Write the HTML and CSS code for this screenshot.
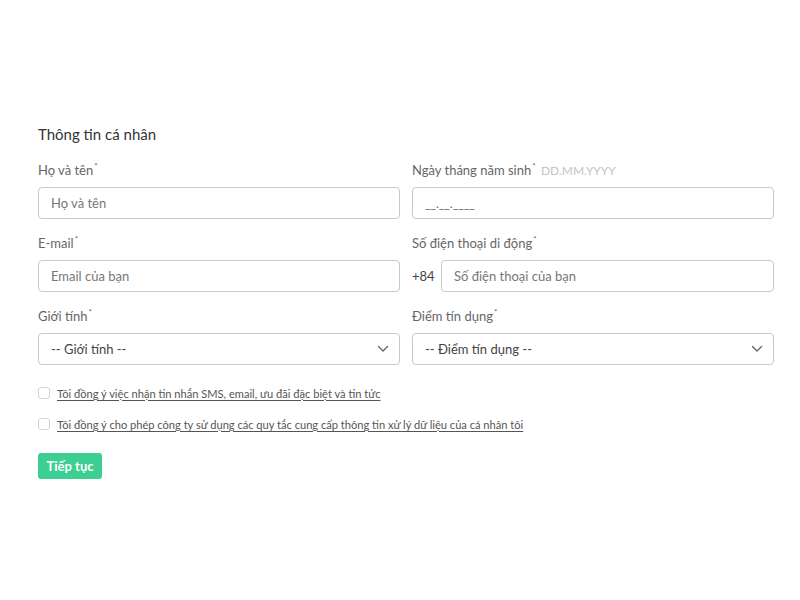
FILE: index.html
```html
<!DOCTYPE html>
<html lang="vi">
<head>
<meta charset="utf-8">
<link rel="stylesheet" href="styles.css">
</head>
<body>
<main class="form">
  <h2 class="title">Thông tin cá nhân</h2>
  <div class="grid">
    <div class="field">
      <label class="label">Họ và tên<sup>*</sup></label>
      <div class="input"><span class="ph">Họ và tên</span></div>
    </div>
    <div class="field">
      <label class="label">Ngày tháng năm sinh<sup>*</sup> <span class="hint">DD.MM.YYYY</span></label>
      <div class="input"><span class="mask">__.__.____</span></div>
    </div>
    <div class="field">
      <label class="label">E-mail<sup>*</sup></label>
      <div class="input"><span class="ph">Email của bạn</span></div>
    </div>
    <div class="field">
      <label class="label">Số điện thoại di động<sup>*</sup></label>
      <div class="phone">
        <span class="prefix">+84</span>
        <div class="input grow"><span class="ph">Số điện thoại của bạn</span></div>
      </div>
    </div>
    <div class="field">
      <label class="label">Giới tính<sup>*</sup></label>
      <div class="input select"><span class="val">-- Giới tính --</span>
        <svg class="chev" width="12" height="8" viewBox="0 0 12 8"><path d="M1.5 1.5 L6 6 L10.5 1.5" fill="none" stroke="#666" stroke-width="1.4" stroke-linecap="round" stroke-linejoin="round"/></svg>
      </div>
    </div>
    <div class="field">
      <label class="label">Điểm tín dụng<sup>*</sup></label>
      <div class="input select"><span class="val">-- Điểm tín dụng --</span>
        <svg class="chev" width="12" height="8" viewBox="0 0 12 8"><path d="M1.5 1.5 L6 6 L10.5 1.5" fill="none" stroke="#666" stroke-width="1.4" stroke-linecap="round" stroke-linejoin="round"/></svg>
      </div>
    </div>
  </div>
  <div class="checks">
    <label class="check"><span class="box"></span><span class="ctext">Tôi đồng ý việc nhận tin nhắn SMS, email, ưu đãi đặc biệt và tin tức</span></label>
    <label class="check"><span class="box"></span><span class="ctext">Tôi đồng ý cho phép công ty sử dụng các quy tắc cung cấp thông tin xử lý dữ liệu của cá nhân tôi</span></label>
  </div>
  <button class="btn">Tiếp tục</button>
</main>
</body>
</html>
```
FILE: styles.css
```css
* { box-sizing: border-box; }
body {
  margin: 0;
  background: #fff;
  font-family: Lato, "Noto Sans", sans-serif;
  color: #555;
}
.form {
  width: 736px;
  margin-left: 38px;
  padding-top: 124px;
}
.title {
  margin: 0 0 17px;
  font-size: 15px;
  line-height: 20px;
  font-weight: 400;
  color: #333;
}
.grid {
  display: grid;
  grid-template-columns: 362px 362px;
  column-gap: 12px;
  row-gap: 15px;
}
.field { display: flex; flex-direction: column; }
.label {
  height: 18px;
  line-height: 18px;
  font-size: 13px;
  color: #666;
  margin-bottom: 8px;
  white-space: nowrap;
}
.label sup {
  font-size: 8px;
  vertical-align: 6px;
  line-height: 0;
  margin-left: 1px;
}
.hint { color: #c4c4c4; font-size: 12px; margin-left: 2px; }
.input {
  height: 32px;
  border: 1px solid #c9c9c9;
  border-radius: 4px;
  padding: 0 12px;
  display: flex;
  align-items: center;
  font-size: 13px;
}
.ph { color: #777; }
.mask { color: #555; font-size: 12px; }
.phone { display: flex; align-items: center; gap: 6px; }
.prefix { width: 23px; font-size: 13px; color: #444; }
.grow { flex: 1; }
.select { justify-content: space-between; padding-right: 10px; }
.val { color: #444; }
.chev { display: block; }
.checks {
  margin-top: 20px;
  display: flex;
  flex-direction: column;
  gap: 15px;
}
.check {
  display: flex;
  align-items: center;
  gap: 7px;
  height: 16px;
  font-size: 11.1px;
  color: #555;
}
.box {
  width: 12px;
  height: 12px;
  border: 1px solid #d4d4d4;
  border-radius: 3px;
  flex: none;
}
.ctext { text-decoration: underline; text-underline-offset: 2px; }
.btn {
  margin-top: 21px;
  width: 64px;
  height: 26px;
  border: 0;
  border-radius: 3px;
  background: #3ccf91;
  color: #fff;
  font-family: inherit;
  font-size: 13px;
  font-weight: 700;
  padding: 0;
  display: block;
}
```
